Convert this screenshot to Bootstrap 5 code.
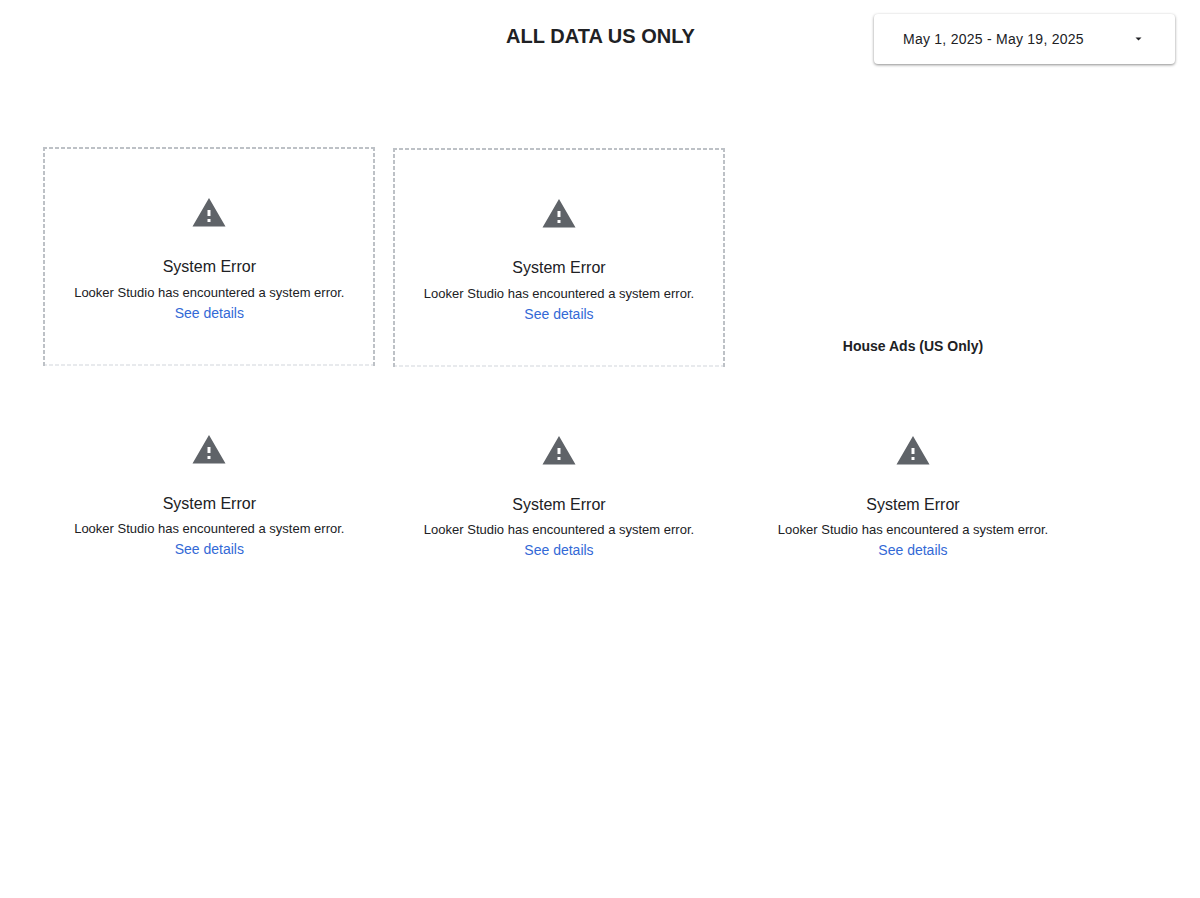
<!DOCTYPE html>
<html lang="en">
<head>
    <meta charset="UTF-8">
    <meta name="viewport" content="width=device-width, initial-scale=1.0">
    <title>All Data US Only</title>
    <link href="https://cdn.jsdelivr.net/npm/bootstrap@5.3.0/dist/css/bootstrap.min.css" rel="stylesheet">
    <style>
        body {
            font-family: "Liberation Sans", Arial, sans-serif;
            color: #202124;
            min-height: 100vh;
        }
        .report-header {
            display: grid;
            grid-template-columns: 1fr auto 1fr;
            align-items: start;
            padding: 13.5px 25px 0;
            height: 147.3px;
        }
        .report-title {
            grid-column: 2;
            font-size: 20px;
            line-height: 24px;
            letter-spacing: .03px;
            padding-left: 1px;
            margin-top: 10.5px;
        }
        .date-picker {
            justify-self: end;
            width: 301px;
            height: 50.4px;
            padding: 1px 31px 0 29px;
            border-radius: 4px;
            font-size: 14px;
            letter-spacing: .25px;
            color: #202124;
            background: #fff;
            border: 0;
            box-shadow: 0 1px 3px rgba(0, 0, 0, .45);
        }
        .board {
            display: grid;
            grid-template-columns: 349.7px 354px 332px;
            padding-left: 43.3px;
        }
        .board-column {
            width: 332px;
            gap: 18px;
        }
        .shifted {
            padding-top: 1px;
        }
        .tile {
            height: 218.7px;
            padding-top: 48.1px;
        }
        /* dashed frame, the bottom edge is lighter than the other three */
        .tile-framed {
            --edge: #bdc1c6;
            background:
                repeating-linear-gradient(90deg, var(--edge) 0 3.97px, transparent 3.97px 5.96px) 0 0 / 100% 2px no-repeat,
                repeating-linear-gradient(180deg, var(--edge) 0 3.97px, transparent 3.97px 5.96px) 0 0 / 2px 100% no-repeat,
                repeating-linear-gradient(180deg, var(--edge) 0 3.97px, transparent 3.97px 5.96px) 100% 0 / 2px 100% no-repeat,
                repeating-linear-gradient(90deg, #e8eaed 0 3.97px, transparent 3.97px 5.96px) 0 100% / 100% 2px no-repeat;
        }
        .warning-icon {
            width: 36px;
            height: 36px;
            fill: #5f6368;
        }
        .error-title {
            font-size: 16px;
            line-height: 24px;
            margin-top: 23.9px;
        }
        .error-text {
            font-size: 13px;
            line-height: 20px;
            margin-top: 3.5px;
        }
        .error-link {
            font-size: 14px;
            line-height: 20px;
            color: #3369d6;
        }
        .section-title {
            font-size: 14px;
            line-height: 20px;
            padding-bottom: 11px;
        }
    </style>
</head>
<body>
    <header class="report-header">
        <h1 class="report-title fw-bold mb-0">ALL DATA US ONLY</h1>
        <button type="button" class="date-picker d-flex align-items-center justify-content-between">
            <span>May 1, 2025 - May 19, 2025</span>
            <svg width="11" height="6" viewBox="0 0 11 6"><path d="M2.5 1.5h6l-3 3z" fill="#202124"/></svg>
        </button>
    </header>

    <main class="board">
        <div class="board-column d-flex flex-column">
            <section class="tile tile-framed d-flex flex-column align-items-center">
                <svg class="warning-icon" viewBox="0 0 24 24"><path d="M1 21h22L12 2 1 21zm12-3h-2v-2h2v2zm0-4h-2v-4h2v4z"/></svg>
                <div class="error-title">System Error</div>
                <div class="error-text">Looker Studio has encountered a system error.</div>
                <a href="#" class="error-link text-decoration-none">See details</a>
            </section>
            <section class="tile d-flex flex-column align-items-center">
                <svg class="warning-icon" viewBox="0 0 24 24"><path d="M1 21h22L12 2 1 21zm12-3h-2v-2h2v2zm0-4h-2v-4h2v4z"/></svg>
                <div class="error-title">System Error</div>
                <div class="error-text">Looker Studio has encountered a system error.</div>
                <a href="#" class="error-link text-decoration-none">See details</a>
            </section>
        </div>

        <div class="board-column shifted d-flex flex-column">
            <section class="tile tile-framed d-flex flex-column align-items-center">
                <svg class="warning-icon" viewBox="0 0 24 24"><path d="M1 21h22L12 2 1 21zm12-3h-2v-2h2v2zm0-4h-2v-4h2v4z"/></svg>
                <div class="error-title">System Error</div>
                <div class="error-text">Looker Studio has encountered a system error.</div>
                <a href="#" class="error-link text-decoration-none">See details</a>
            </section>
            <section class="tile d-flex flex-column align-items-center">
                <svg class="warning-icon" viewBox="0 0 24 24"><path d="M1 21h22L12 2 1 21zm12-3h-2v-2h2v2zm0-4h-2v-4h2v4z"/></svg>
                <div class="error-title">System Error</div>
                <div class="error-text">Looker Studio has encountered a system error.</div>
                <a href="#" class="error-link text-decoration-none">See details</a>
            </section>
        </div>

        <div class="board-column shifted d-flex flex-column">
            <div class="tile d-flex align-items-end justify-content-center">
                <h2 class="section-title fw-bold mb-0">House Ads (US Only)</h2>
            </div>
            <section class="tile d-flex flex-column align-items-center">
                <svg class="warning-icon" viewBox="0 0 24 24"><path d="M1 21h22L12 2 1 21zm12-3h-2v-2h2v2zm0-4h-2v-4h2v4z"/></svg>
                <div class="error-title">System Error</div>
                <div class="error-text">Looker Studio has encountered a system error.</div>
                <a href="#" class="error-link text-decoration-none">See details</a>
            </section>
        </div>
    </main>

    <script src="https://cdn.jsdelivr.net/npm/bootstrap@5.3.0/dist/js/bootstrap.bundle.min.js"></script>
</body>
</html>
